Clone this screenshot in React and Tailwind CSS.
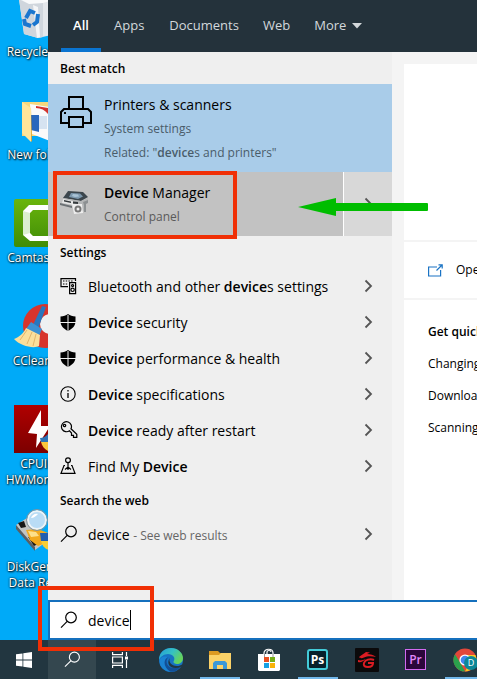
import React from 'react';

function Magnifier({ className, size = 18 }) {
  return (
    <svg width={size} height={size} viewBox="0 0 18 18" fill="none" stroke="currentColor" strokeWidth="1.2" className={className}>
      <circle cx="11" cy="6.5" r="5.3" />
      <path d="M7.2 10.4 1 16.6" />
    </svg>
  );
}

function Chevron() {
  return (
    <svg width="10" height="14" viewBox="0 0 10 14" fill="none" stroke="#555" strokeWidth="1.8">
      <path d="M2.500 1.500 8 7l-5.500 5.500" />
    </svg>
  );
}

function PrinterIcon() {
  return (
    <svg width="32" height="32" viewBox="0 0 32 32" fill="none" stroke="#000" strokeWidth="2">
      <path d="M9 13V1h14v12" />
      <path d="M9 27H1V16l3-3h24l3 3v11h-8" />
      <path d="M9 21h14v10H9z" />
      <path d="M4 17h2" />
    </svg>
  );
}

function DeviceManagerIcon() {
  return (
    <svg width="30" height="30" viewBox="0 0 30 30">
      <path d="m8 2 15 1 5 5-7 4L3 9z" fill="#3c464d" />
      <path d="m11 4 9 .5 3 3-5 2.500-9-2z" fill="#7c98ae" />
      <path d="m13 5 5 .5 1 2-4 .5-3-1z" fill="#a9c3d6" />
      <path d="m3 9 18 3 7-3v4l-4 2v7l-11-1v-4L2 14z" fill="#b4b6b7" />
      <path d="m3 10 10 2v4L2 14z" fill="#e5e6e6" />
      <path d="m4 11 7 1.500v1.500L4 12.500zM13 12.500l5 .5v2l-5-.5z" fill="#353a3d" />
      <path d="m0 14 12 3v2L0 16z" fill="#6c7175" />
      <path d="M12 15h10l1 9-9 1z" fill="#eeeeee" />
      <circle cx="18" cy="20" r="3.500" fill="#777" />
      <circle cx="18" cy="20" r="1.500" fill="#eee" />
      <path d="m23 13 5-2v3l-2 1v8h-2v-7z" fill="#8c9092" />
    </svg>
  );
}

function BluetoothIcon() {
  return (
    <svg width="18" height="18" viewBox="0 0 18 18" fill="none" stroke="#000" strokeWidth="1.200">
      <path d="M8 9.600H1V1.600h14.500V4" />
      <path d="M3 4h10M3 7h5" strokeDasharray="1.500 1.200" />
      <path d="M9.600 5.600h6v11h-6z" fill="#efefef" />
      <circle cx="12.600" cy="8.500" r="1" />
      <circle cx="12.600" cy="12.800" r="1.700" />
    </svg>
  );
}

function ShieldIcon() {
  return (
    <svg width="16" height="17" viewBox="0 0 16 17">
      <path d="M8 0c2 1.800 4.500 2.300 7.500 2.500v5C15.500 12 12 15 8 17 4 15 .5 12 .5 7.500v-5C3.500 2.300 6 1.800 8 0z" fill="#000" />
      <path d="M8 1v16M0 8.500h16" stroke="#efefef" strokeWidth="1" />
    </svg>
  );
}

function InfoIcon() {
  return (
    <svg width="16" height="16" viewBox="0 0 16 16" fill="none" stroke="#000" strokeWidth="1.100">
      <circle cx="8" cy="8" r="7.200" />
      <path d="M8 7v5M8 4v1.500" strokeWidth="1.300" />
    </svg>
  );
}

function KeyIcon() {
  return (
    <svg width="18" height="18" viewBox="0 0 18 18" fill="none" stroke="#000" strokeWidth="1.200">
      <path d="M9.500 9.800c-1.200.8-2.600 1.200-4 .8A5 5 0 1 1 11 7.800l5.800 5.500v3h-3.300v-2h-2v-2.300z" />
      <circle cx="4.500" cy="4.500" r="1.200" />
    </svg>
  );
}

function FindIcon() {
  return (
    <svg width="16" height="18" viewBox="0 0 16 18" fill="none" stroke="#000" strokeWidth="1.200">
      <circle cx="8" cy="3.200" r="2.400" />
      <path d="M8 5.600V13M5 8.500H4L1 16.400h14L12 8.500h-1M5 12.500l3-2.500 3 2.500" />
    </svg>
  );
}

function RecycleArt() {
  return (
    <svg width="48" height="48" viewBox="0 0 48 48">
      <path d="m5 6 10 4 27-4-5 36-13 3-14-4z" fill="#e4e7eb" />
      <path d="m5 6 10 4 14-2v36l-5 1-14-4z" fill="#d0d6dd" />
      <path d="m3 5 8-4 10 3 10-4 12 6-14 4-14 1z" fill="#f9fafb" />
      <path d="m24 14 2 30-3 1-4-33z" fill="#f4f5f7" />
      <g fill="none" stroke="#1b76cf" strokeWidth="4">
        <path d="m12 25 4-7 5 2M24 21l-1 8-4 3M17 33l-6-2-1-5" />
      </g>
    </svg>
  );
}

function FolderArt() {
  return (
    <svg width="48" height="48" viewBox="0 0 48 48">
      <path d="M8 6h26v34H8z" fill="#f6d77d" />
      <path d="m16 8 20 3v34l-18-7z" fill="#fafafa" />
      <path d="m22 10 12 2v6c-3-4-7-6-12-6z" fill="#d3342e" />
      <path d="M17 19h8v17l-8-2z" fill="#2867bd" />
      <path d="M25 20h8v13h-8z" fill="#d6e3f1" />
      <path d="m8 6 9 6v34L8 37z" fill="#ffe59a" />
      <path d="m17 12 1 33-1 1z" fill="#dda936" />
    </svg>
  );
}

function CamtasiaArt() {
  return (
    <svg width="48" height="48" viewBox="0 0 48 48">
      <defs>
        <linearGradient id="camtasiaGreen" x1="0" y1="0" x2="0" y2="1">
          <stop offset="0" stopColor="#6ab50c" />
          <stop offset="1" stopColor="#3f8c06" />
        </linearGradient>
      </defs>
      <rect width="48" height="48" rx="2" fill="url(#camtasiaGreen)" />
      <path d="M15 6h31v5H19l-3 3v20l3 3h27v5H16l-7-6V12z" fill="#fff" />
      <path d="m9 12 7 2v20l-7 2z" fill="#dcefd0" />
    </svg>
  );
}

function CCleanerArt() {
  return (
    <svg width="48" height="48" viewBox="0 0 48 48">
      <circle cx="31" cy="24" r="22" fill="#d7342c" />
      <circle cx="36" cy="22" r="10" fill="#edf0f2" />
      <path d="m28 4 4 1-8 22-6-2z" fill="#2877bf" />
      <path d="m17 20 11 7-3 7-13-7z" fill="#3c91d3" />
      <path d="m12 26 14 7-1 11c-5 3-19 0-25-7 5-2 10-6 12-11z" fill="#fbdf9c" />
      <path d="m13 28-7 10M18 30l-5 12M22 32l-3 12" stroke="#e3b56b" />
    </svg>
  );
}

function CpuArt() {
  return (
    <svg width="48" height="48" viewBox="0 0 48 48">
      <defs>
        <linearGradient id="cpuRed" x1="0" y1="0" x2="0" y2="1">
          <stop offset="0" stopColor="#b00000" />
          <stop offset="1" stopColor="#7c0000" />
        </linearGradient>
      </defs>
      <rect width="48" height="48" fill="url(#cpuRed)" />
      <path d="M27 5 14 28l9 1-1 14 14-22h-9z" fill="#fff" />
      <path d="M26 33c4 0 6-2 8-4v8h-7z" fill="#2c72b6" />
      <path d="M27 37h7v9c-4-2-6-5-7-9z" fill="#fbc63c" />
    </svg>
  );
}

function DiskArt() {
  return (
    <svg width="48" height="48" viewBox="0 0 48 48">
      <path d="m2 17 11-7 22 22-14 10z" fill="#c2c4c3" />
      <path d="m2 17 19 22v4L2 21z" fill="#5b5f62" />
      <path d="m4 15 6-2 2 6-5 1zM14 29l8 2 2 5-4 2z" fill="#171717" />
      <path d="m12 22 12-1 10 4v9l-10 4-8-6z" fill="#f2a91d" />
      <path d="m14 23 8 1 3 4-8 1z" fill="#fde08a" />
      <circle cx="23" cy="12" r="9" fill="#b9dcf5" stroke="#eef4f7" strokeWidth="2" />
      <path d="M17 10c1-3 4-5 7-4-2 2-4 4-7 4z" fill="#fff" />
      <circle cx="23" cy="12" r="10.500" fill="none" stroke="#83949f" />
      <path d="M26 25h9v8h-8z" fill="#205eb0" />
      <path d="M27 33h8v9c-4-1-7-4-8-9z" fill="#f8cd35" />
    </svg>
  );
}

const shortcuts = [
  { label: ['Recycle Bin'], art: RecycleArt },
  { label: ['New folder'], art: FolderArt },
  { label: ['Camtasia 9'], art: CamtasiaArt },
  { label: ['CCleaner'], art: CCleanerArt },
  { label: ['CPUID', 'HWMonitor'], art: CpuArt },
  { label: ['DiskGenius', 'Data Rec...'], art: DiskArt },
];

const settings = [
  { icon: BluetoothIcon, text: <>Bluetooth and other <b className="font-semibold">device</b>s settings</> },
  { icon: ShieldIcon, text: <><b className="font-semibold">Device</b> security</> },
  { icon: ShieldIcon, text: <><b className="font-semibold">Device</b> performance &amp; health</> },
  { icon: InfoIcon, text: <><b className="font-semibold">Device</b> specifications</> },
  { icon: KeyIcon, text: <><b className="font-semibold">Device</b> ready after restart</> },
  { icon: FindIcon, text: <>Find My <b className="font-semibold">Device</b></> },
];

function Desktop() {
  return (
    <div className="w-12 shrink-0 overflow-hidden bg-[#00aaf8]">
      <div className="-mt-[7px] w-[76px]">
        {shortcuts.map(({ label, art: Art }) => (
          <button key={label[0]} className="flex h-[103px] w-full flex-col items-center gap-[3px]">
            <Art />
            <span className="text-center text-xs leading-4 whitespace-nowrap text-white [text-shadow:1px_1px_2px_#000,0_0_2px_#000]">
              {label.map((line) => <span key={line} className="block">{line}</span>)}
            </span>
          </button>
        ))}
      </div>
    </div>
  );
}

function Tabs() {
  return (
    <nav className="flex h-[52px] bg-[#24323b] pl-[13px] text-[13px] text-[#d3d8db]">
      <button className="flex w-10 items-center justify-center border-y-4 border-t-transparent border-b-[#0a74d0] font-semibold text-white">All</button>
      <button className="px-[13px]">Apps</button>
      <button className="px-[12px]">Documents</button>
      <button className="px-[12px]">Web</button>
      <button className="flex items-center gap-[6px] px-[12px]">
        More
        <svg width="10" height="6" viewBox="0 0 10 6"><path d="M0 0h10L5 5.500z" fill="currentColor" /></svg>
      </button>
    </nav>
  );
}

function Heading({ children }) {
  return <h2 className="flex h-8 items-center px-3 pt-px text-xs font-semibold">{children}</h2>;
}

function Row({ icon: Icon, children }) {
  return (
    <button className="flex h-9 w-full items-center pr-[19px] pl-3 text-left whitespace-nowrap">
      <span className="flex w-7 shrink-0"><Icon /></span>
      <span className="flex-1 pt-px">{children}</span>
      <Chevron />
    </button>
  );
}

function Results() {
  return (
    <div className="w-[344px] shrink-0 bg-[#efefef] text-sm">
      <Heading>Best match</Heading>
      <button className="flex h-[88px] w-full gap-3 bg-[#a9cce9] px-3 pt-3 text-left">
        <PrinterIcon />
        <span className="-mt-[3px] block leading-6">
          <span className="block">Printers &amp; scanners</span>
          <span className="block text-xs leading-6 text-[#4a5c6a]">System settings</span>
          <span className="block text-xs leading-6 text-[#4a5c6a]">Related: "<b className="font-semibold">device</b>s and printers"</span>
        </span>
      </button>
      <div className="relative flex h-16">
        <button className="flex flex-1 gap-[14px] bg-[#c2c2c2] pt-[9px] pl-3 text-left">
          <span className="pt-2"><DeviceManagerIcon /></span>
          <span className="block leading-6">
            <span className="block"><b className="font-semibold">Device</b> Manager</span>
            <span className="block text-xs leading-6 text-[#5a5a5a]">Control panel</span>
          </span>
        </button>
        <button aria-label="Show more" className="flex w-[49px] items-center justify-end border-l border-white bg-[#d8d8d8] pr-[19px]"><Chevron /></button>
        <div className="pointer-events-none absolute -top-px left-[5px] h-[68px] w-[184px] border-4 border-[#f02f05]" />
        <svg width="130" height="20" viewBox="0 0 130 20" className="pointer-events-none absolute top-[25px] left-[250px]">
          <path d="M0 10 38 1v5h91a1 1 0 0 1 1 1v6a1 1 0 0 1-1 1H38v5z" fill="#00bd00" />
        </svg>
      </div>
      <Heading>Settings</Heading>
      {settings.map(({ icon, text }, i) => <Row key={i} icon={icon}>{text}</Row>)}
      <Heading>Search the web</Heading>
      <Row icon={Magnifier}>device <span className="text-xs text-[#666]">- See web results</span></Row>
    </div>
  );
}

function Details() {
  return (
    <div className="min-w-0 flex-1 overflow-hidden bg-[#f4f4f4] pt-3 pl-3 text-xs whitespace-nowrap">
      <div className="h-44 bg-white" />
      <a href="#open" className="mt-[2px] flex h-14 items-center gap-[13px] bg-white pl-6">
        <svg width="15" height="13" viewBox="0 0 15 13" fill="none" stroke="#1a73c4" strokeWidth="1.200" className="shrink-0">
          <path d="M9 3H.6v9h12V6M8.500 6.500 14 1M10.500.8H14.200v3.700" />
        </svg>
        <span>Open</span>
      </a>
      <div className="mt-[2px] h-full bg-white pt-4 pl-6">
        <h3 className="leading-8 font-semibold">Get quick help from web</h3>
        <a href="#default" className="block leading-8">Changing default printer</a>
        <a href="#drivers" className="block leading-8">Downloading printer driver</a>
        <a href="#scanning" className="block leading-8">Scanning a document</a>
      </div>
    </div>
  );
}

function SearchBox() {
  return (
    <div className="relative flex h-10 items-center border-y-2 border-l-2 border-[#1570bd] bg-white pl-[10px] text-sm">
      <span className="flex w-7 shrink-0"><Magnifier /></span>
      <input aria-label="Search" defaultValue="device" className="field-sizing-content bg-transparent pt-px outline-none" />
      <span className="h-5 w-px bg-black" />
      <div className="pointer-events-none absolute -top-4 -left-3 z-10 h-[65px] w-[116px] border-4 border-[#f02f05]" />
    </div>
  );
}

function EdgeArt() {
  return (
    <svg width="24" height="24" viewBox="0 0 24 24">
      <defs>
        <linearGradient id="edgeTop" x1="0" y1="0" x2="1" y2="0.500">
          <stop offset="0" stopColor="#249bd8" />
          <stop offset="0.550" stopColor="#35c1c4" />
          <stop offset="1" stopColor="#66d35b" />
        </linearGradient>
      </defs>
      <circle cx="12" cy="12" r="12" fill="#1673c4" />
      <path d="M0 12C0 4 6 0 12 0c7 0 12 5 12 10 0 4-3 6-6 6-2 0-4-1-3.500-2.500C17 10 14 6 9 6c-4 0-8 3-9 6z" fill="url(#edgeTop)" />
      <path d="M9 9c-4 2-5 10 5 14.500C5 25-1 17 1 11c2-3 6-3 8-2z" fill="#1b83d2" />
      <path d="M9.500 9C6 12 7 20 15 20c3 0 5-1 7-2-3 5-8 6.500-11 5.500C4 19 4 11 9.500 9z" fill="#124f96" />
      <path d="M11 10c-2 3 1 8 7 8 2 0 4-.6 5-1.500l.5.5-1 1.500c-2 1-4 1.500-6 1.500-7 0-9-6-5.500-10z" fill="#223641" />
    </svg>
  );
}

function ExplorerArt() {
  return (
    <svg width="22" height="18" viewBox="0 0 22 18">
      <path d="M0 0h9l2 2h11v5H0z" fill="#dc9a22" />
      <path d="M0 4h10l2-2h10v16H0z" fill="#fbd268" />
      <path d="M4 18v-6l2-2h10l2 2v6h-4v-4H8v4z" fill="#3b98d8" />
    </svg>
  );
}

function StoreArt() {
  return (
    <svg width="24" height="24" viewBox="0 0 24 24">
      <path d="M7 7V5c0-5 9-5 9 0v2M10 7V4c0-2 4-2 4 0" fill="none" stroke="#fff" strokeWidth="1.200" />
      <path d="M1 6h22v16l-1 1H2l-1-1z" fill="#fff" />
      <path d="M7.500 9.500V6M16 9V6" fill="none" stroke="#999" />
      <path d="M7 9h5v5H7z" fill="#e84f20" />
      <path d="M13 9h5v5h-5z" fill="#76af18" />
      <path d="M7 15h5v5H7z" fill="#16a0e3" />
      <path d="M13 15h5v5h-5z" fill="#f9b307" />
    </svg>
  );
}

function GarenaArt() {
  return (
    <svg width="24" height="24" viewBox="0 0 24 24">
      <rect width="24" height="24" rx="1" fill="#0b0a0b" />
      <path d="M4 9c2-2 5-3 7-5l4 .5-3 1.500c3 0 7 1 9 3-4-1-9-1-12 .5-2 1-4 1-5-.5z" fill="#dc1c23" />
      <path d="M3 12c3 1 5 0 8-1-3 2-5 4-8 3z" fill="#dc1c23" />
      <path d="M19 12c-4-2-9 0-10 3s1 4 4 4 5-1 5-4h-5" fill="none" stroke="#dc1c23" strokeWidth="2" />
    </svg>
  );
}

function ChromeArt() {
  return (
    <svg width="24" height="24" viewBox="0 0 24 24">
      <circle cx="12" cy="12" r="11.500" fill="#e2473a" />
      <path d="M2 6.200 8 16l4 7.500A11.500 11.500 0 0 1 2 6.200z" fill="#2ba24c" />
      <path d="M12 7h10.400A11.500 11.500 0 0 1 12 23.500L17 14z" fill="#fbc722" />
      <circle cx="12" cy="12" r="5.600" fill="#fff" />
      <circle cx="12" cy="12" r="4.300" fill="#4286ee" />
    </svg>
  );
}

function TaskButton({ label, active, children }) {
  return (
    <button aria-label={label} className="relative flex w-[49px] shrink-0 items-center justify-center">
      {children}
      {active && <span className="absolute bottom-0 left-[5px] h-[2px] w-10 bg-[#72b8ec]" />}
    </button>
  );
}

function Taskbar() {
  return (
    <footer className="flex h-[39px] overflow-hidden bg-[#223640]">
      <button aria-label="Start" className="flex w-12 shrink-0 items-center justify-center">
        <svg width="16" height="16" viewBox="0 0 16 16" fill="#fff">
          <path d="M0 2.300 6.500 1.400v6.100H0zM7.300 1.300 16 0v7.500H7.300zM0 8.400h6.500v6.200L0 13.700zM7.300 8.400H16V16l-8.700-1.300z" />
        </svg>
      </button>
      <button aria-label="Search" className="flex w-12 shrink-0 items-center justify-center bg-[#34474f] text-white"><Magnifier size={17} /></button>
      <button aria-label="Task view" className="flex w-12 shrink-0 items-center justify-center">
        <svg width="16" height="16" viewBox="0 0 16 16" fill="none" stroke="#fff" strokeWidth="1.200">
          <path d="M.6 0v2.600h9.800V0M.6 5h9.800v6H.6zM.6 16v-2.600h9.800V16M14.500 0v4M14.500 8v8" />
          <path d="M13 4.500h3v3h-3z" fill="#fff" stroke="none" />
        </svg>
      </button>
      <div className="ml-[2px] flex">
        <TaskButton label="Edge"><EdgeArt /></TaskButton>
        <TaskButton label="File Explorer" active><ExplorerArt /></TaskButton>
        <TaskButton label="Store"><StoreArt /></TaskButton>
        <TaskButton label="Photoshop" active>
          <span className="flex h-[21px] w-[21px] items-center justify-center rounded-[3px] border-2 border-[#43cbd8] bg-[#06202b] text-xs leading-none font-bold text-white">Ps</span>
        </TaskButton>
        <TaskButton label="Garena"><GarenaArt /></TaskButton>
        <TaskButton label="Premiere">
          <span className="flex h-[21px] w-[21px] items-center justify-center border border-[#d26af0] bg-[#2b063b] text-xs leading-none font-semibold text-[#e087fa]">Pr</span>
        </TaskButton>
        <TaskButton label="Chrome" active>
          <ChromeArt />
          <span className="absolute top-[16px] left-[24px] flex h-[14px] w-[14px] items-center justify-center rounded-full bg-[#0b8797] text-[9px] text-white">D</span>
        </TaskButton>
      </div>
    </footer>
  );
}

export default function App() {
  return (
    <div className="flex min-h-screen flex-col overflow-hidden font-['Open_Sans','Noto_Sans',sans-serif] text-black">
      <div className="flex flex-1">
        <Desktop />
        <main className="flex min-w-0 flex-1 flex-col">
          <Tabs />
          <div className="flex min-h-0 flex-1">
            <Results />
            <Details />
          </div>
          <SearchBox />
        </main>
      </div>
      <Taskbar />
    </div>
  );
}
